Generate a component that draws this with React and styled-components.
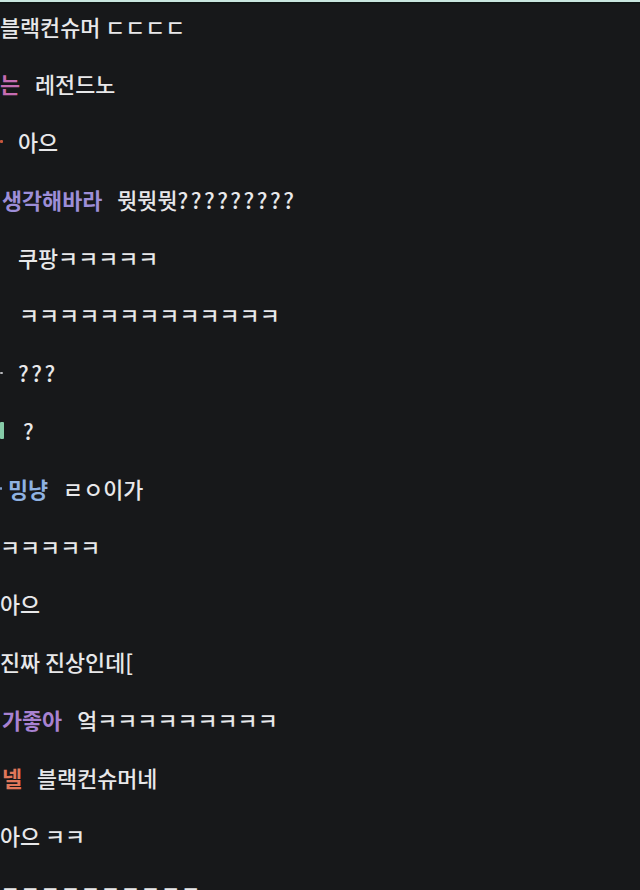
import React from "react";
import styled, { createGlobalStyle } from "styled-components";

const GlobalStyle = createGlobalStyle`
  html, body {
    margin: 0;
    padding: 0;
    background: #17181a;
  }
  body {
    font-family: "Noto Sans CJK KR", "Noto Sans", sans-serif;
  }
`;

const ChatWindow = styled.div`
  width: 640px;
  height: 890px;
  overflow: hidden;
  background: #17181a;
  border-top: 2px solid #c9e6df;
`;

const TopShade = styled.div`
  height: 2px;
  background: #0f1514;
`;

const ChatList = styled.div`
  display: flex;
  flex-direction: column;
`;

const Row = styled.div`
  display: flex;
  align-items: center;
  height: 57.8px;
  padding-bottom: 13px;
  box-sizing: border-box;
  padding-left: ${props => props.indent || 0}px;
  font-size: 21.8px;
  line-height: 1;
  white-space: nowrap;
`;

const Name = styled.span`
  color: ${props => props.color};
  font-weight: 700;
  margin-right: 15px;
`;

const Fragment = styled.span`
  display: inline-block;
  width: ${props => props.w}px;
  height: ${props => props.h}px;
  margin-right: ${props => props.gap}px;
  background: ${props => props.color};
  border-radius: 1px;
`;

const Message = styled.span`
  color: #e8e8ea;
  font-weight: 500;
`;

const Punct = styled.span`
  letter-spacing: 2.5px;
`;

const messages = [
  { text: "블랙컨슈머 ㄷㄷㄷㄷ" },
  { name: "는", color: "#c66cb2", indent: -1, text: "레전드노" },
  { frag: { w: 3, h: 3, color: "#c9563c", gap: 15 }, text: "아으" },
  { name: "생각해바라", color: "#9d8ed8", indent: 2, text: "뭣뭣뭣?????????" },
  { indent: 18, text: "쿠팡ㅋㅋㅋㅋㅋ" },
  { indent: 19, text: "ㅋㅋㅋㅋㅋㅋㅋㅋㅋㅋㅋㅋㅋ" },
  { frag: { w: 3, h: 2, color: "#b8b8bc", gap: 15 }, text: "???" },
  { frag: { w: 4, h: 17, color: "#86cba8", gap: 19 }, text: "?" },
  { frag: { w: 2, h: 3, color: "#7f9cc9", gap: 6 }, name: "밍냥", color: "#8fb2e2", text: "ㄹㅇ이가" },
  { text: "ㅋㅋㅋㅋㅋ" },
  { text: "아으" },
  { text: "진짜 진상인데[" },
  { name: "가좋아", color: "#a882d2", indent: 2, text: "엌ㅋㅋㅋㅋㅋㅋㅋㅋㅋ" },
  { name: "넬", color: "#e0775a", indent: 2, text: "블랙컨슈머네" },
  { text: "아으 ㅋㅋ" },
  { text: "ㅋㅋㅋㅋㅋㅋㅋㅋㅋㅋ" },
];

// question marks are wider in the original font
const renderText = text =>
  text.split(/(\?+)/).filter(Boolean).map((part, i) =>
    part[0] === "?" ? <Punct key={i}>{part}</Punct> : <React.Fragment key={i}>{part}</React.Fragment>
  );

const App = () => {
  return (
    <>
      <GlobalStyle />
      <ChatWindow>
        <TopShade />
        <ChatList>
          {messages.map((m, i) => (
            <Row key={i} indent={m.indent}>
              {m.frag && (
                <Fragment w={m.frag.w} h={m.frag.h} color={m.frag.color} gap={m.frag.gap} />
              )}
              {m.name && <Name color={m.color}>{m.name}</Name>}
              <Message>{renderText(m.text)}</Message>
            </Row>
          ))}
        </ChatList>
      </ChatWindow>
    </>
  );
};

export default App;
